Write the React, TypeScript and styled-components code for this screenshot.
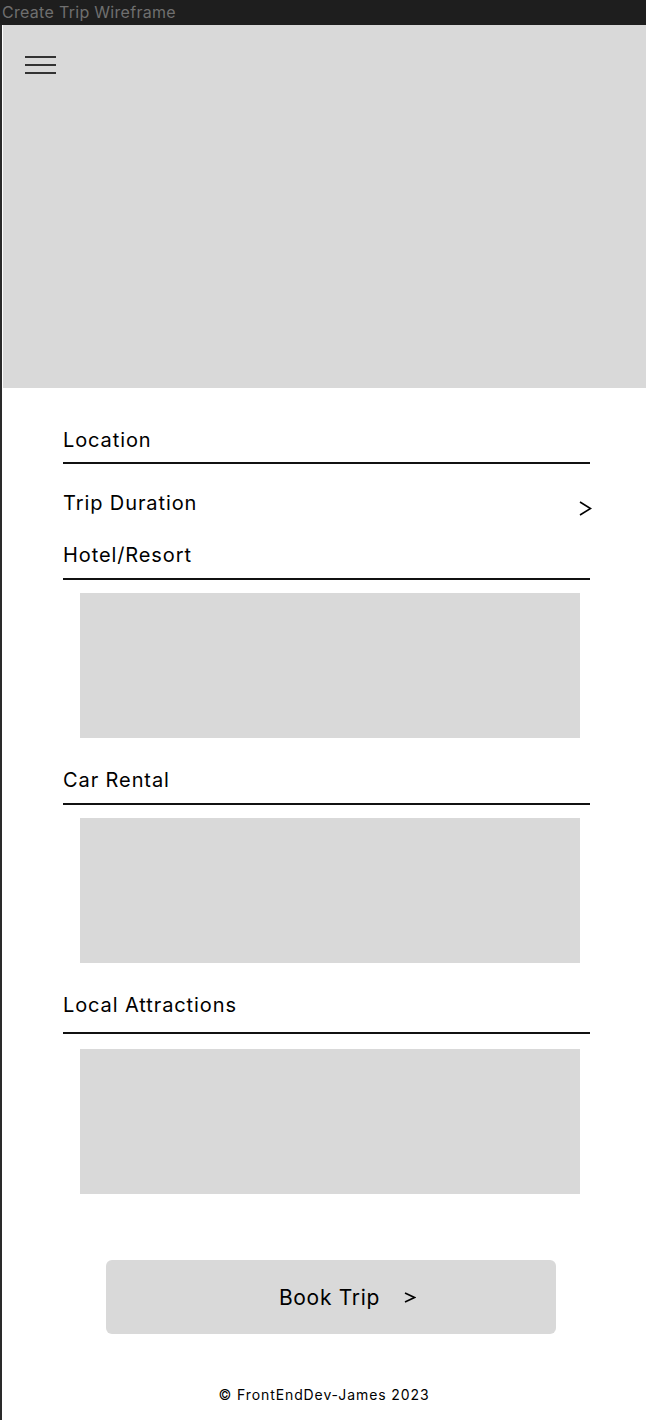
import React from "react";
import styled, { createGlobalStyle } from "styled-components";

const GlobalStyle = createGlobalStyle`
  html, body { margin: 0; padding: 0; background: #ffffff; }
  body { font-family: Inter, "Open Sans", sans-serif; color: #000; }
  * { box-sizing: border-box; }
`;

const Page = styled.div`
  width: 646px;
  min-height: 1420px;
  display: flex;
  flex-direction: column;
`;

const TitleBar = styled.div`
  height: 25px;
  background: #1e1e1e;
  color: #6f6f6f;
  font-family: Inter, sans-serif;
  font-size: 16px;
  letter-spacing: 0.3px;
  line-height: 25px;
  padding-left: 2px;
  white-space: nowrap;
`;

const Frame = styled.div`
  flex: 1;
  border-left: 2px solid #2a2a2a;
  display: flex;
  flex-direction: column;
`;

const Hero = styled.div`
  height: 363px;
  background: #d9d9d9;
  padding: 31px 0 0 22px;
  margin-left: 1px;
`;

const MenuButton = styled.div`
  width: 31px;
  display: flex;
  flex-direction: column;
  gap: 6px;
`;

const MenuLine = styled.span`
  display: block;
  height: 2px;
  background: #333333;
`;

const Form = styled.div`
  display: flex;
  flex-direction: column;
  padding: 40px 56px 0 61px;
`;

const Label = styled.div<{ $underline?: boolean; $gap?: number }>`
  font-size: 20px;
  line-height: 24px;
  letter-spacing: 0.9px;
  padding-bottom: ${(p) => (p.$underline ? `${p.$gap ?? 10}px` : "0")};
  border-bottom: ${(p) => (p.$underline ? "2px solid #111111" : "none")};
`;

const Row = styled.div`
  display: flex;
  align-items: flex-start;
  justify-content: space-between;
`;

const ChevronIcon = styled.svg<{ $top?: number; $right?: number }>`
  display: block;
  flex-shrink: 0;
  margin-top: ${(p) => p.$top ?? 0}px;
  margin-bottom: ${(p) => -(p.$top ?? 0)}px;
  margin-right: ${(p) => p.$right ?? 0}px;
`;

const Placeholder = styled.div`
  height: 145px;
  background: #d9d9d9;
  margin: 0 10px 0 17px;
`;

const Spacer = styled.div<{ $h: number }>`
  height: ${(p) => p.$h}px;
  flex-shrink: 0;
`;

const BookButton = styled.button`
  height: 74px;
  margin: 0 34px 0 43px;
  border: none;
  border-radius: 6px;
  background: #d9d9d9;
  display: flex;
  align-items: center;
  justify-content: center;
  gap: 24px;
  padding: 0 0 0 33px;
  font-family: inherit;
  font-size: 21px;
  letter-spacing: 0.7px;
  color: #000;
`;

const Footer = styled.div`
  text-align: center;
  font-size: 14px;
  line-height: 17px;
  letter-spacing: 0.9px;
  padding: 52px 0 0 0;
`;

function Chevron({ w, h, top, right }: { w: number; h: number; top?: number; right?: number }) {
  return (
    <ChevronIcon $top={top} $right={right} width={w} height={h} viewBox={`0 0 ${w} ${h}`}>
      <polyline
        points={`1,1 ${w - 1.5},${h / 2} 1,${h - 1}`}
        fill="none"
        stroke="#000"
        strokeWidth="1.6"
        strokeLinejoin="miter"
      />
    </ChevronIcon>
  );
}

export default function App() {
  return (
    <Page>
      <GlobalStyle />
      <TitleBar>Create Trip Wireframe</TitleBar>
      <Frame>
        <Hero>
          <MenuButton>
            <MenuLine />
            <MenuLine />
            <MenuLine />
          </MenuButton>
        </Hero>
        <Form>
          <Label $underline>Location</Label>
          <Spacer $h={27} />
          <Row>
            <Label>Trip Duration</Label>
            <Chevron w={13} h={15} top={10} right={-2} />
          </Row>
          <Spacer $h={28} />
          <Label $underline $gap={11}>Hotel/Resort</Label>
          <Spacer $h={13} />
          <Placeholder />
          <Spacer $h={30} />
          <Label $underline $gap={11}>Car Rental</Label>
          <Spacer $h={13} />
          <Placeholder />
          <Spacer $h={30} />
          <Label $underline $gap={15}>Local Attractions</Label>
          <Spacer $h={15} />
          <Placeholder />
          <Spacer $h={66} />
          <BookButton>
            <span>Book Trip</span>
            <Chevron w={12} h={11} />
          </BookButton>
        </Form>
        <Footer>© FrontEndDev-James 2023</Footer>
      </Frame>
    </Page>
  );
}
